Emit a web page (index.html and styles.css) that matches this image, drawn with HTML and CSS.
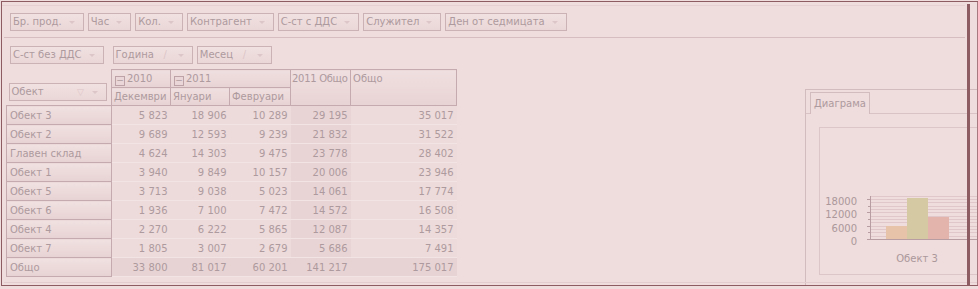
FILE: index.html
```html
<!DOCTYPE html>
<html lang="bg">
<head>
  <meta charset="UTF-8" />
  <title>Пивот анализ</title>
  <link rel="stylesheet" href="styles.css">
</head>
<body>
  <div class="window">
    <div class="main">
      <!-- filter fields -->
      <div class="filters">
        <div class="field-row">
          <div class="field">Бр. прод.<span class="arrow"></span></div>
          <div class="field">Час<span class="arrow"></span></div>
          <div class="field">Кол.<span class="arrow"></span></div>
          <div class="field">Контрагент<span class="arrow"></span></div>
          <div class="field">С-ст с ДДС<span class="arrow"></span></div>
          <div class="field">Служител<span class="arrow"></span></div>
          <div class="field">Ден от седмицата<span class="arrow"></span></div>
        </div>
      </div>
      <div class="filters second">
        <div class="field-row">
          <div class="field">С-ст без ДДС<span class="arrow"></span></div>
          <div class="field sorted wide-gap">Година<span class="sort">/</span><span class="arrow"></span></div>
          <div class="field sorted">Месец<span class="sort">/</span><span class="arrow"></span></div>
        </div>
      </div>

      <div class="content">
        <!-- pivot grid -->
        <table class="pivot">
          <colgroup>
            <col class="c-row"><col class="c-m"><col class="c-m"><col class="c-m2"><col class="c-t"><col class="c-g">
          </colgroup>
          <thead>
            <tr class="h1">
              <th rowspan="2" class="corner">
                <div class="field row-field">Обект<span class="funnel">&#9661;</span><span class="arrow"></span></div>
              </th>
              <th class="hcell"><span class="toggle">&minus;</span>2010</th>
              <th class="hcell" colspan="2"><span class="toggle">&minus;</span>2011</th>
              <th class="hcell tight" rowspan="2">2011 Общо</th>
              <th class="hcell" rowspan="2">Общо</th>
            </tr>
            <tr class="h2">
              <th class="hcell">Декември</th>
              <th class="hcell">Януари</th>
              <th class="hcell">Февруари</th>
            </tr>
          </thead>
          <tbody>
            <tr><th>Обект 3</th><td>5 823</td><td>18 906</td><td>10 289</td><td class="tot">29 195</td><td class="grand">35 017</td></tr>
            <tr><th>Обект 2</th><td>9 689</td><td>12 593</td><td>9 239</td><td class="tot">21 832</td><td class="grand">31 522</td></tr>
            <tr><th>Главен склад</th><td>4 624</td><td>14 303</td><td>9 475</td><td class="tot">23 778</td><td class="grand">28 402</td></tr>
            <tr><th>Обект 1</th><td>3 940</td><td>9 849</td><td>10 157</td><td class="tot">20 006</td><td class="grand">23 946</td></tr>
            <tr><th>Обект 5</th><td>3 713</td><td>9 038</td><td>5 023</td><td class="tot">14 061</td><td class="grand">17 774</td></tr>
            <tr><th>Обект 6</th><td>1 936</td><td>7 100</td><td>7 472</td><td class="tot">14 572</td><td class="grand">16 508</td></tr>
            <tr><th>Обект 4</th><td>2 270</td><td>6 222</td><td>5 865</td><td class="tot">12 087</td><td class="grand">14 357</td></tr>
            <tr><th>Обект 7</th><td>1 805</td><td>3 007</td><td>2 679</td><td class="tot">5 686</td><td class="grand">7 491</td></tr>
            <tr class="total"><th>Общо</th><td>33 800</td><td>81 017</td><td>60 201</td><td class="tot">141 217</td><td class="grand">175 017</td></tr>
          </tbody>
        </table>

        <!-- chart panel -->
        <div class="chart-panel">
          <div class="tabs"><div class="tab">Диаграма</div></div>
          <div class="plot">
            <svg width="160" height="144" viewBox="0 0 160 144">
              <g stroke="#e0c8ca" stroke-width="1">
                <line x1="50" y1="108.5" x2="160" y2="108.5"/>
                <line x1="50" y1="104.5" x2="160" y2="104.5"/>
                <line x1="50" y1="101.5" x2="160" y2="101.5"/>
                <line x1="50" y1="98.5" x2="160" y2="98.5"/>
                <line x1="50" y1="94.5" x2="160" y2="94.5"/>
                <line x1="50" y1="91.5" x2="160" y2="91.5"/>
                <line x1="50" y1="88.5" x2="160" y2="88.5"/>
                <line x1="50" y1="84.5" x2="160" y2="84.5"/>
                <line x1="50" y1="81.5" x2="160" y2="81.5"/>
                <line x1="50" y1="78.5" x2="160" y2="78.5"/>
                <line x1="50" y1="74.5" x2="160" y2="74.5"/>
                <line x1="50" y1="71.5" x2="160" y2="71.5"/>
                <line x1="50" y1="68.5" x2="160" y2="68.5"/>
              </g>
              <g stroke="#b89ea2" stroke-width="1">
                <line x1="47" y1="111.5" x2="50" y2="111.5"/>
                <line x1="48" y1="104.5" x2="50" y2="104.5"/>
                <line x1="47" y1="98.5" x2="50" y2="98.5"/>
                <line x1="48" y1="91.5" x2="50" y2="91.5"/>
                <line x1="47" y1="84.5" x2="50" y2="84.5"/>
                <line x1="48" y1="78.5" x2="50" y2="78.5"/>
                <line x1="47" y1="71.5" x2="50" y2="71.5"/>
              </g>
              <rect x="66" y="98" width="21" height="13.5" fill="#e6c3a9"/>
              <rect x="87" y="70" width="21" height="41.5" fill="#d4c9a3"/>
              <rect x="108" y="89" width="21" height="22.5" fill="#e2b4ab"/>
              <line x1="50.5" y1="68" x2="50.5" y2="112" stroke="#b89ea2"/>
              <line x1="50" y1="111.5" x2="160" y2="111.5" stroke="#b89ea2"/>
              <g class="axis-text" text-anchor="end">
                <text x="37" y="77">18000</text>
                <text x="37" y="90">12000</text>
                <text x="37" y="104">6000</text>
                <text x="37" y="117">0</text>
              </g>
              <text class="axis-text" x="97" y="134" text-anchor="middle">Обект 3</text>
            </svg>
          </div>
        </div>
      </div>
    </div>
    <div class="bottom-line"></div>
    <div class="splitter"></div>
    <div class="edge"></div>
  </div>
</body>
</html>
```

FILE: styles.css
```css
body {
  margin: 0;
  background: #efdcdc;
  font-family: 'DejaVu Sans', sans-serif;
  font-size: 10px;
  color: #ad9a9e;
}

.window {
  position: relative;
  box-sizing: border-box;
  width: 977px;
  height: 285px;
  margin: 1px 0 0 1px;
  border: 1px solid #8c5c62;
  border-right: none;
  overflow: hidden;
}

.main {
  width: 963px;
  margin-top: 3px;
  border-top: 1px solid #e6d0d1;
}

.filters {
  padding: 7px 0 6px 6px;
  margin-left: 2px;
  border-bottom: 1px solid #d6bec0;
}

.filters.second {
  padding: 8px 0 5px 6px;
  border-bottom: none;
}

.field-row {
  display: flex;
  gap: 4px;
}

.field {
  position: relative;
  box-sizing: border-box;
  height: 18px;
  line-height: 16px;
  padding: 0 21px 0 2px;
  border: 1px solid #cbb2b5;
  background: linear-gradient(#f1e1e1, #ead6d7);
  white-space: nowrap;
  text-align: left;
}

.field.sorted {
  padding-right: 38px;
}

.field.wide-gap {
  margin-left: 5px;
}

.field .arrow {
  position: absolute;
  right: 8px;
  top: 7px;
  border-left: 3px solid transparent;
  border-right: 3px solid transparent;
  border-top: 3px solid #dcc6c8;
}

.field .sort {
  position: absolute;
  right: 25px;
  top: 0;
  color: #dcc6c8;
}

.field .funnel {
  position: absolute;
  right: 22px;
  top: 0;
  color: #dcc6c8;
  font-size: 9px;
}

.content {
  display: flex;
  align-items: flex-start;
}

.pivot {
  margin-left: 4px;
  border-collapse: collapse;
  table-layout: fixed;
  width: 451px;
}

.c-row { width: 105px; }
.c-m { width: 59px; }
.c-m2 { width: 61px; }
.c-t { width: 60px; }
.c-g { width: 106px; }

.pivot th,
.pivot td {
  padding: 0 3px;
  font-weight: normal;
  white-space: nowrap;
  overflow: hidden;
}

.pivot .corner {
  padding: 0 4px 4px 2px;
  vertical-align: bottom;
  border: none;
  border-bottom: 1px solid #c5abaf;
}

.row-field {
  padding-right: 30px;
}

.pivot .hcell {
  height: 17px;
  padding: 0 2px;
  text-align: left;
  vertical-align: top;
  line-height: 17px;
  border: 1px solid #c5abaf;
  background: linear-gradient(#f0dfe0, #e8d3d4);
}

.pivot .hcell.tight {
  padding: 0 1px;
  letter-spacing: -0.3px;
}

.toggle {
  display: inline-block;
  box-sizing: border-box;
  width: 10px;
  height: 10px;
  margin: 0 2px 0 1px;
  border: 1px solid #bda3a7;
  line-height: 7px;
  font-size: 9px;
  text-align: center;
  vertical-align: -1px;
  background: #ead6d8;
}

.pivot tbody th {
  height: 18px;
  text-align: left;
  border: 1px solid #c5abaf;
  background: linear-gradient(#f1e1e1, #e7d2d3);
}

.pivot tbody td {
  height: 18px;
  text-align: right;
  border-bottom: 1px solid #f2e3e4;
  background: #eddadb;
}

.pivot tbody td.tot {
  background: #e9d4d5;
}

.pivot tbody td.grand {
  background: #eddada;
}

.pivot tr.total td {
  background: #e8d3d4;
}

.chart-panel {
  flex-shrink: 0;
  width: 171px;
  height: 200px;
  margin: 20px -12px 0 auto;
  border-left: 1px solid #d3bcbe;
  border-top: 1px solid #d3bcbe;
}

.tabs {
  padding: 2px 0 0 4px;
  border-bottom: 1px solid #d9c3c5;
}

.tab {
  display: inline-block;
  height: 21px;
  line-height: 21px;
  padding: 0 3px;
  margin-bottom: -1px;
  border: 1px solid #d3bcbe;
  border-bottom: none;
  background: #efdcdc;
}

.plot {
  height: 146px;
  margin: 13px 0 0 13px;
  border: 1px solid #dcc6c8;
  border-right: none;
}

.plot svg {
  display: block;
}

.axis-text {
  fill: #ab989b;
  font-family: 'DejaVu Sans', sans-serif;
  font-size: 10px;
}

.bottom-line {
  position: absolute;
  left: 2px;
  right: 0;
  bottom: 2px;
  height: 1px;
  background: #e3cdce;
}

.splitter {
  position: absolute;
  left: 965px;
  top: 2px;
  bottom: 0;
  width: 3px;
  background: #8c5c62;
}

.edge {
  position: absolute;
  left: 975px;
  top: 0;
  bottom: 0;
  width: 1px;
  background: #a8797e;
}
```
